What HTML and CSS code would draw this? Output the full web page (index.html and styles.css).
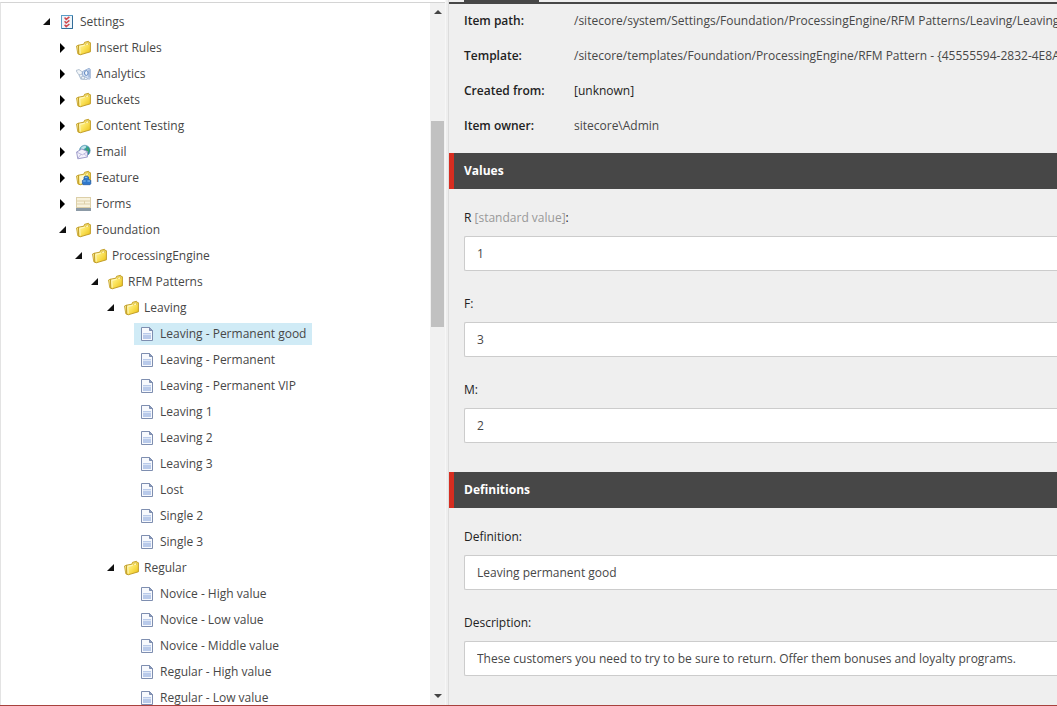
FILE: index.html
```html
<!DOCTYPE html>
<html lang="en">
<head>
<meta charset="utf-8">
<title>Content Editor</title>
<link rel="stylesheet" href="styles.css">
</head>
<body>
<svg class="sprite" aria-hidden="true">
  <defs>
    <linearGradient id="gold" x1="0" y1="0" x2="1" y2="1">
      <stop offset="0" stop-color="#fff9b5"/><stop offset=".5" stop-color="#fbe35c"/><stop offset="1" stop-color="#e9bd10"/>
    </linearGradient>
    <linearGradient id="globe" x1="0" y1="0" x2="1" y2="1">
      <stop offset="0" stop-color="#8ccbe0"/><stop offset=".5" stop-color="#329a96"/><stop offset="1" stop-color="#1d6d9c"/>
    </linearGradient>
    <symbol id="folder" viewBox="0 0 16 16">
      <path d="M.5 6 2.600 5 3 14.200 1.800 13.800z" fill="#f7e68a" stroke="#c09a20" stroke-width=".8" stroke-linejoin="round"/>
      <path d="M2.600 5.200 7.800 4.200 8.600 2.300 12.600 1.300 13.400 2.500 14.400 2.700V11.800L4.200 14.800 2.800 14.200z" fill="url(#gold)" stroke="#bb951c" stroke-width=".9" stroke-linejoin="round"/>
      <path d="M9.500 4.800 10.200 3.200 12.600 2.700V5" fill="#fff6b8" stroke="#c9a62e" stroke-width=".6"/>
      <path d="M3.600 6.300 8.600 5.400M3.700 6.500 4.200 13.500" fill="none" stroke="#fffbd8" stroke-width=".8"/>
    </symbol>
    <symbol id="settings" viewBox="0 0 16 16">
      <rect x="1.500" y="1.500" width="11" height="13" fill="#eef5fa" stroke="#5b9dc6"/>
      <path d="M12.500 2v12.500H2" fill="none" stroke="#326c98"/>
      <path d="m4.600 3.600 1.600 1.800 3.200-2.600M4.600 7.200l1.600 1.800 3.200-2.600M4.600 10.800l1.600 1.800 3.200-2.600" fill="none" stroke="#cf4a50" stroke-width="1.500"/>
    </symbol>
    <symbol id="analytics" viewBox="0 0 16 16">
      <path d="M0 4.500 3 3.500 6.500 6 5.500 8.800 2.500 8.500z" fill="#f1f5f9" stroke="#a6b6c8" stroke-width=".8"/>
      <path d="M3 8.800 5 13 11.500 13.500" fill="none" stroke="#b0c0d4" stroke-width="1.200"/>
      <path d="m6.500 5.500 6.500-3.200 1.300 1v9l-1.200 1L6.500 9.500z" fill="#d3e0f3" stroke="#8ea7cd" stroke-width=".8"/>
      <ellipse cx="10.300" cy="7" rx="1.800" ry="2.400" fill="#f3f8fd" stroke="#5e86bf"/>
      <path d="M13 3.500v8" stroke="#6f90c4" stroke-width=".8"/>
      <path d="M5.500 10.500h3v2.500h-3z" fill="#edf2f7" stroke="#9fb3c9" stroke-width=".7"/>
    </symbol>
    <symbol id="email" viewBox="0 0 16 16">
      <circle cx="8.800" cy="6.600" r="5.400" fill="url(#globe)" stroke="#5796b6" stroke-width=".6"/>
      <path d="M5 4c1.500-2 4.500-2.500 5-1.500S8 5.600 5.500 5.500z" fill="#bfe3ec"/>
      <path d="M11.400 3c1.400 1.400 1.800 3.500 1 6l-1.800-2.500z" fill="#43aa67"/>
      <path d="m.6 8 5.200-3L11.400 7.500V13L1.800 14.800z" fill="#f4f2fc" stroke="#9593c4" stroke-width=".9" stroke-linejoin="round"/>
      <path d="m.8 8.200 5.600 2.600L11.400 7.700M1.800 14.400l3.300-4.200M11.400 12.800 8.100 9.900" fill="none" stroke="#aeacd6" stroke-width=".8"/>
    </symbol>
    <symbol id="feature" viewBox="0 0 16 16">
      <use href="#folder"/>
      <path d="M4 6.600 8.600 5.700 9 12.500 4.500 13.800z" fill="#fff9da"/>
      <path d="M8 8.600V7L9.200 6.200h2.400l1 .8V9.800H14l.8.8v3.300l-.8.8H7.200l-.8-.8v-3.300L7.200 9.800H8z" fill="#2f78cb" stroke="#1f569f" stroke-width=".7"/>
      <path d="M8.800 7.400h2.500M7.200 11h2.500M11.400 11H14" stroke="#91c5f3"/>
    </symbol>
    <symbol id="forms" viewBox="0 0 16 16">
      <path d="M0 1h15v14H0z" fill="#dccfa8"/>
      <path d="M1 2h13v2.500H1zM1 5.500h7v2H1zM9 5.500h5v2H9zM1 8.500h13v2.500H1z" fill="#f8f2dc"/>
      <path d="M0 12h15v3H0z" fill="#8c9aa6"/>
    </symbol>
    <symbol id="doc" viewBox="0 0 16 16">
      <path d="M1.500 1.500H9.500L12.500 4.500V14.500H1.500z" fill="#f7f9fd" stroke="#7e8eb0"/>
      <path d="M9.500 1.500V4.500H12.500z" fill="#8c9cbc" stroke="#7e8eb0"/>
      <path d="M3 7h8v6H3z" fill="#b9caea"/>
      <path d="M3 8.500h8" stroke="#dce6f6"/>
    </symbol>
    <symbol id="open" viewBox="0 0 8 10"><path d="M8 1v7H1z" fill="#111"/></symbol>
    <symbol id="closed" viewBox="0 0 8 10"><path d="M2 0v10l5-5z" fill="#000"/></symbol>
  </defs>
</svg>
<div class="editor">
  <nav class="tree-pane" aria-label="Content tree">
    <ul class="tree">
      <li>
        <div class="node"><button class="toggle" aria-label="Collapse Settings"><svg><use href="#open"/></svg></button><a class="item" href="#"><svg><use href="#settings"/></svg>Settings</a></div>
        <ul>
          <li><div class="node"><button class="toggle" aria-label="Expand Insert Rules"><svg><use href="#closed"/></svg></button><a class="item" href="#"><svg><use href="#folder"/></svg>Insert Rules</a></div></li>
          <li><div class="node"><button class="toggle" aria-label="Expand Analytics"><svg><use href="#closed"/></svg></button><a class="item" href="#"><svg><use href="#analytics"/></svg>Analytics</a></div></li>
          <li><div class="node"><button class="toggle" aria-label="Expand Buckets"><svg><use href="#closed"/></svg></button><a class="item" href="#"><svg><use href="#folder"/></svg>Buckets</a></div></li>
          <li><div class="node"><button class="toggle" aria-label="Expand Content Testing"><svg><use href="#closed"/></svg></button><a class="item" href="#"><svg><use href="#folder"/></svg>Content Testing</a></div></li>
          <li><div class="node"><button class="toggle" aria-label="Expand Email"><svg><use href="#closed"/></svg></button><a class="item" href="#"><svg><use href="#email"/></svg>Email</a></div></li>
          <li><div class="node"><button class="toggle" aria-label="Expand Feature"><svg><use href="#closed"/></svg></button><a class="item" href="#"><svg><use href="#feature"/></svg>Feature</a></div></li>
          <li><div class="node"><button class="toggle" aria-label="Expand Forms"><svg><use href="#closed"/></svg></button><a class="item" href="#"><svg><use href="#forms"/></svg>Forms</a></div></li>
          <li>
            <div class="node"><button class="toggle" aria-label="Collapse Foundation"><svg><use href="#open"/></svg></button><a class="item" href="#"><svg><use href="#folder"/></svg>Foundation</a></div>
            <ul>
              <li>
                <div class="node"><button class="toggle" aria-label="Collapse ProcessingEngine"><svg><use href="#open"/></svg></button><a class="item" href="#"><svg><use href="#folder"/></svg>ProcessingEngine</a></div>
                <ul>
                  <li>
                    <div class="node"><button class="toggle" aria-label="Collapse RFM Patterns"><svg><use href="#open"/></svg></button><a class="item" href="#"><svg><use href="#folder"/></svg>RFM Patterns</a></div>
                    <ul>
                      <li>
                        <div class="node"><button class="toggle" aria-label="Collapse Leaving"><svg><use href="#open"/></svg></button><a class="item" href="#"><svg><use href="#folder"/></svg>Leaving</a></div>
                        <ul>
                          <li><div class="node leaf"><a class="item selected" href="#" aria-current="true"><svg><use href="#doc"/></svg>Leaving - Permanent good</a></div></li>
                          <li><div class="node leaf"><a class="item" href="#"><svg><use href="#doc"/></svg>Leaving - Permanent</a></div></li>
                          <li><div class="node leaf"><a class="item" href="#"><svg><use href="#doc"/></svg>Leaving - Permanent VIP</a></div></li>
                          <li><div class="node leaf"><a class="item" href="#"><svg><use href="#doc"/></svg>Leaving 1</a></div></li>
                          <li><div class="node leaf"><a class="item" href="#"><svg><use href="#doc"/></svg>Leaving 2</a></div></li>
                          <li><div class="node leaf"><a class="item" href="#"><svg><use href="#doc"/></svg>Leaving 3</a></div></li>
                          <li><div class="node leaf"><a class="item" href="#"><svg><use href="#doc"/></svg>Lost</a></div></li>
                          <li><div class="node leaf"><a class="item" href="#"><svg><use href="#doc"/></svg>Single 2</a></div></li>
                          <li><div class="node leaf"><a class="item" href="#"><svg><use href="#doc"/></svg>Single 3</a></div></li>
                        </ul>
                      </li>
                      <li>
                        <div class="node"><button class="toggle" aria-label="Collapse Regular"><svg><use href="#open"/></svg></button><a class="item" href="#"><svg><use href="#folder"/></svg>Regular</a></div>
                        <ul>
                          <li><div class="node leaf"><a class="item" href="#"><svg><use href="#doc"/></svg>Novice - High value</a></div></li>
                          <li><div class="node leaf"><a class="item" href="#"><svg><use href="#doc"/></svg>Novice - Low value</a></div></li>
                          <li><div class="node leaf"><a class="item" href="#"><svg><use href="#doc"/></svg>Novice - Middle value</a></div></li>
                          <li><div class="node leaf"><a class="item" href="#"><svg><use href="#doc"/></svg>Regular - High value</a></div></li>
                          <li><div class="node leaf"><a class="item" href="#"><svg><use href="#doc"/></svg>Regular - Low value</a></div></li>
                        </ul>
                      </li>
                    </ul>
                  </li>
                </ul>
              </li>
            </ul>
          </li>
        </ul>
      </li>
    </ul>
    <div class="scrollbar">
      <button class="scroll-arrow" aria-label="Scroll up"><svg viewBox="0 0 8 4"><path d="M0 4h8L4 0z"/></svg></button>
      <div class="track"><div class="thumb"></div></div>
      <button class="scroll-arrow" aria-label="Scroll down"><svg viewBox="0 0 8 4"><path d="M0 0h8L4 4z"/></svg></button>
    </div>
  </nav>
  <div class="splitter"></div>
  <main class="content">
    <div class="tabs"><div class="tab"></div></div>
    <table class="info">
      <tr><th scope="row">Item path:</th><td>/sitecore/system/Settings/Foundation/ProcessingEngine/RFM Patterns/Leaving/Leaving</td></tr>
      <tr><th scope="row">Template:</th><td>/sitecore/templates/Foundation/ProcessingEngine/RFM Pattern - {45555594-2832-4E8A</td></tr>
      <tr><th scope="row">Created from:</th><td class="strong">[unknown]</td></tr>
      <tr><th scope="row">Item owner:</th><td>sitecore\Admin</td></tr>
    </table>
    <section>
      <h2>Values</h2>
      <div class="fields">
        <div class="field"><label for="r">R <span class="hint">[standard value]</span>:</label><input id="r" type="text" value="1"></div>
        <div class="field"><label for="f">F:</label><input id="f" type="text" value="3"></div>
        <div class="field"><label for="m">M:</label><input id="m" type="text" value="2"></div>
      </div>
    </section>
    <section>
      <h2>Definitions</h2>
      <div class="fields">
        <div class="field"><label for="definition">Definition:</label><input id="definition" type="text" value="Leaving permanent good"></div>
        <div class="field"><label for="description">Description:</label><input id="description" type="text" value="These customers you need to try to be sure to return. Offer them bonuses and loyalty programs."></div>
      </div>
    </section>
  </main>
</div>
</body>
</html>
```
FILE: styles.css
```css
* { box-sizing: border-box; }
body {
  margin: 0;
  font: 12px/16px "Open Sans", "Noto Sans", sans-serif;
  color: #474747;
}
button { padding: 0; border: 0; background: none; }
.sprite { position: absolute; width: 0; height: 0; }

.editor {
  display: grid;
  grid-template-columns: 445px 4px minmax(0, 1fr);
  grid-template-rows: minmax(0, 1fr);
  height: 100vh;
  border-bottom: 1px solid #a8413d;
  overflow: hidden;
}

.tree-pane {
  display: flex;
  margin-top: 2px;
  border-top: 1px solid #d4d4d4;
  border-left: 1px solid #e3e3e3;
  background: #fff;
  overflow: hidden;
}
.tree, .tree ul { margin: 0; padding: 0; list-style: none; }
.tree { flex: 1; padding: 6px 0 0 37px; }
.tree ul { padding-left: 16px; }
.node { display: flex; align-items: center; height: 26px; }
.leaf { padding-left: 16px; }
.toggle { display: flex; justify-content: center; width: 16px; }
.toggle svg { width: 8px; height: 10px; }
.item {
  display: flex;
  align-items: center;
  gap: 4px;
  height: 22px;
  padding: 0 6px;
  color: #474747;
  text-decoration: none;
  white-space: nowrap;
}
.item svg { width: 16px; height: 16px; }
.selected { background: #d0ebf6; }

.scrollbar {
  display: flex;
  flex-direction: column;
  width: 15px;
  padding-left: 1px;
  background: #f1f1f1;
}
.scroll-arrow { display: flex; align-items: center; justify-content: center; height: 18px; }
.scroll-arrow svg { width: 8px; height: 4px; fill: #444; }
.track { flex: 1; padding-top: 100px; }
.thumb { height: 206px; margin-right: 1px; background: #c1c1c1; }
.splitter {
  border-left: 1px solid #f7f7f7;
  border-right: 1px solid #dcdcdc;
  background: #eee;
}

.content { background: #efefef; overflow: hidden; }
.tabs {
  height: 4px;
  padding-left: 15px;
  border-bottom: 2px solid #474747;
}
.tab { width: 75px; height: 2px; background: #474747; }
.info { margin: 0 0 9px 15px; border-collapse: collapse; }
.info th, .info td { height: 35px; padding: 0 0 2px; text-align: left; white-space: nowrap; }
.info th { min-width: 110px; font-weight: 600; color: #222; }
.info .strong { color: #222; }

h2 {
  margin: 0;
  padding: 10px;
  border-left: 5px solid #d62d20;
  background: #474747;
  color: #fff;
  font-size: 12px;
  font-weight: 700;
  line-height: 16px;
}
.fields {
  display: flex;
  flex-direction: column;
  gap: 25px;
  padding: 21px 0 29px 15px;
}
.field { display: flex; flex-direction: column; gap: 10px; color: #222; }
.hint { color: #999; }
.field input {
  width: 100%;
  height: 35px;
  padding: 0 12px;
  border: 1px solid #ccc;
  border-right: 0;
  border-radius: 2px 0 0 2px;
  background: #fff;
  color: #474747;
  font: inherit;
}
```
